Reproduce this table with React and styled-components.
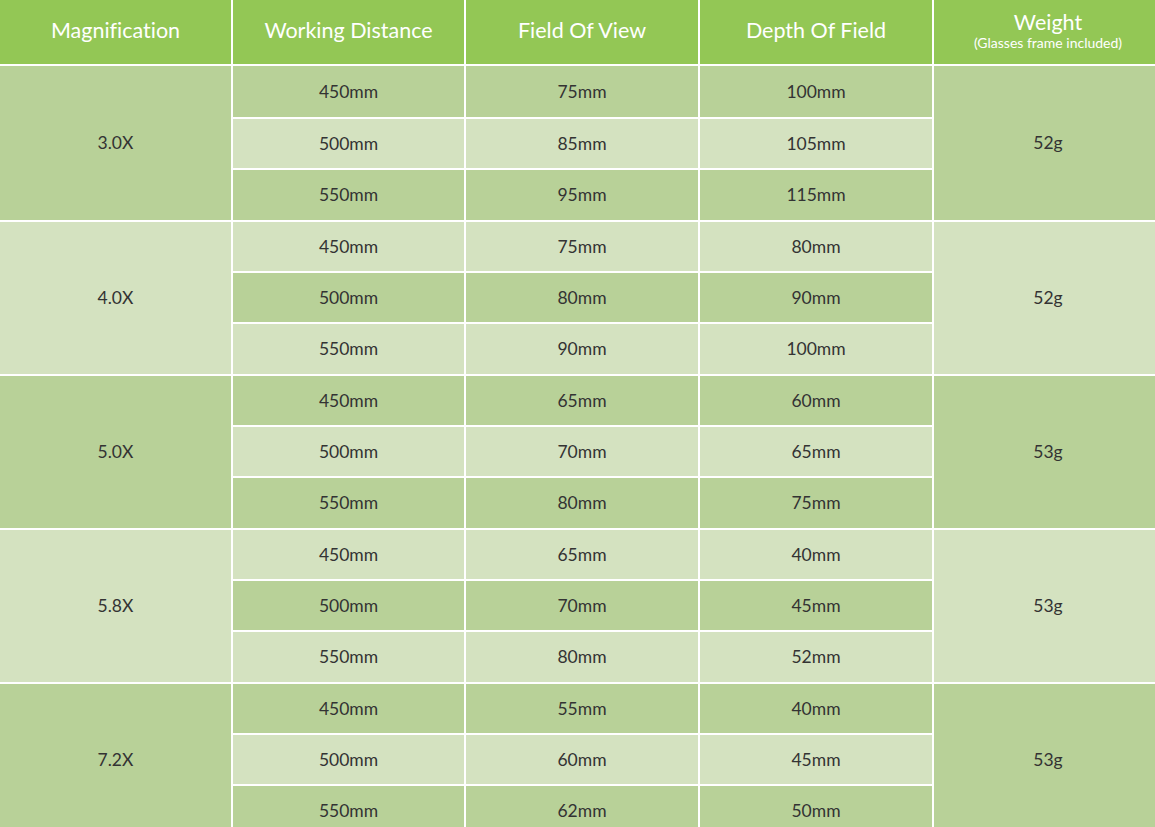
import React from 'react';
import styled, { createGlobalStyle } from 'styled-components';

const GlobalStyle = createGlobalStyle`
  html, body {
    margin: 0;
    padding: 0;
    overflow: hidden;
    background: #ffffff;
    font-family: Lato, "Open Sans", sans-serif;
  }
`;

const DARK = '#b8d198';
const LIGHT = '#d4e2c0';

const groups = [
  { mag: '3.0X', weight: '52g', rows: [['450mm', '75mm', '100mm'], ['500mm', '85mm', '105mm'], ['550mm', '95mm', '115mm']] },
  { mag: '4.0X', weight: '52g', rows: [['450mm', '75mm', '80mm'], ['500mm', '80mm', '90mm'], ['550mm', '90mm', '100mm']] },
  { mag: '5.0X', weight: '53g', rows: [['450mm', '65mm', '60mm'], ['500mm', '70mm', '65mm'], ['550mm', '80mm', '75mm']] },
  { mag: '5.8X', weight: '53g', rows: [['450mm', '65mm', '40mm'], ['500mm', '70mm', '45mm'], ['550mm', '80mm', '52mm']] },
  { mag: '7.2X', weight: '53g', rows: [['450mm', '55mm', '40mm'], ['500mm', '60mm', '45mm'], ['550mm', '62mm', '50mm']] },
];

const Table = styled.table`
  width: 1162px;
  table-layout: fixed;
  border-collapse: separate;
  border-spacing: 0;
`;

const Col = styled.col`
  width: ${p => p.$w}px;
`;

const HeadRow = styled.tr`
  height: 66px;
`;

const BodyRow = styled.tr`
  height: ${p => (p.$first ? '53px' : '51.33px')};
`;

const Head = styled.th`
  background: #93c755;
  color: #ffffff;
  font-family: Lato, sans-serif;
  font-weight: 400;
  font-size: 21.5px;
  font-variant-ligatures: none;
  padding: 0 0 4px;
  text-align: center;
  vertical-align: middle;
  border-right: ${p => (p.$last ? 'none' : '2px solid #ffffff')};
  border-bottom: 2px solid #ffffff;
`;

const HeadLine = styled.span`
  display: block;
  line-height: 24px;
`;

const Sub = styled.span`
  display: block;
  font-size: 14px;
  line-height: 16px;
  margin-top: 1px;
`;

const Cell = styled.td`
  background: ${p => (p.$dark ? DARK : LIGHT)};
  color: #333333;
  font-family: Lato, sans-serif;
  font-size: 17.5px;
  text-align: center;
  vertical-align: middle;
  padding: 0;
  border-right: ${p => (p.$last ? 'none' : '2px solid #ffffff')};
  border-bottom: 2px solid #ffffff;
`;

export default function App() {
  let idx = 0;
  return (
    <>
      <GlobalStyle />
      <Table>
        <colgroup>
          <Col $w={233} />
          <Col $w={233} />
          <Col $w={234} />
          <Col $w={234} />
          <Col $w={228} />
        </colgroup>
        <thead>
          <HeadRow>
            <Head>Magnification</Head>
            <Head>Working Distance</Head>
            <Head>Field Of View</Head>
            <Head>Depth Of Field</Head>
            <Head $last>
              <HeadLine>Weight</HeadLine>
              <Sub>(Glasses frame included)</Sub>
            </Head>
          </HeadRow>
        </thead>
        <tbody>
          {groups.map(g =>
            g.rows.map((r, i) => {
              const dark = idx % 2 === 0;
              const groupDark = (idx - i) % 2 === 0;
              const first = idx === 0;
              idx += 1;
              return (
                <BodyRow key={g.mag + i} $first={first}>
                  {i === 0 && (
                    <Cell rowSpan={3} $dark={groupDark}>{g.mag}</Cell>
                  )}
                  {r.map((v, j) => (
                    <Cell key={j} $dark={dark}>{v}</Cell>
                  ))}
                  {i === 0 && (
                    <Cell rowSpan={3} $dark={groupDark} $last>{g.weight}</Cell>
                  )}
                </BodyRow>
              );
            })
          )}
        </tbody>
      </Table>
    </>
  );
}
